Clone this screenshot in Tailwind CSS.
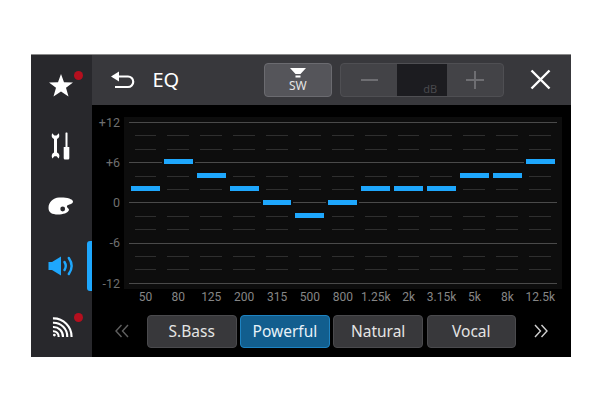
<!DOCTYPE html>
<html lang="en">
  <head>
    <meta charset="UTF-8" />
    <title>EQ</title>
    <script src="https://cdn.jsdelivr.net/npm/@tailwindcss/browser@4"></script>
  </head>
  <body class="bg-white font-['Noto_Sans',sans-serif]">
    <div class="pl-[31px] pt-[54px]">
      <div class="flex w-[540px] h-[303px] bg-black border-t border-[#8a8a8a] overflow-hidden">
        <!-- side menu -->
        <nav class="w-[60.5px] shrink-0 bg-[#28282c] flex flex-col">
          <div class="relative h-[60.4px] flex items-center justify-center">
            <svg class="ml-[-0.5px]" width="26" height="25" viewBox="0 0 26 25"><polygon fill="#fff" points="13,1 16,9.2 25,9.4 18,14.8 20.5,23.6 13,18.6 5.5,23.6 8,14.8 1,9.4 10,9.2" /></svg>
            <span class="absolute left-[42.5px] top-[15.5px] w-[9px] h-[9px] rounded-full bg-[#b50f1e]"></span>
          </div>
          <div class="h-[60.4px] flex items-center justify-center">
            <svg width="20" height="28" viewBox="0 0 20 28" fill="#fff">
              <path d="M1.2 1.2 C0.2 3.5 0.6 6 3 7 V20.5 C0.6 21.5 0.2 24 1.4 26.6 L3.4 24.2 H5.6 L7.6 26.6 C9 24 8.6 21.5 6 20.5 V7 C8.4 6 8.8 3.5 7.8 1.2 L5.6 3.6 H3.4 Z" />
              <rect x="14.5" y="0.5" width="2" height="15" rx="0.6" />
              <path d="M12.7 15 H18.3 V26 Q18.3 27.5 17 27.5 H14 Q12.7 27.5 12.7 26 Z" />
            </svg>
          </div>
          <div class="h-[60.4px] flex items-center justify-center">
            <svg width="26" height="18" viewBox="0 0 26 18">
              <path fill="#fff" d="M0.5 11 C0.5 5 5 1 11 0.5 C17 0 25 1.5 25 4.5 C25 7.5 20 7 19 9 C18.5 11 21 11 21 13 C20 16 15 17.5 10 17.5 C4 17.5 0.5 15.5 0.5 11 Z" />
              <circle cx="14.7" cy="12" r="2.4" fill="#28282c" />
            </svg>
          </div>
          <div class="relative h-[60.4px] flex items-center justify-center">
            <svg width="26" height="20" viewBox="0 0 26 20" fill="none">
              <path fill="#1ea7fd" d="M0.5 6 H4 L13 0.5 V19.5 L4 14 H0.5 Z" />
              <path stroke="#1ea7fd" stroke-width="2.4" stroke-linecap="round" d="M16.5 6 Q19 10 16.5 14 M20.8 2 Q26.5 10 20.8 18" />
            </svg>
            <span class="absolute right-0 top-[4.5px] w-[4.5px] h-[50px] bg-[#1ea7fd] rounded-l-[3px]"></span>
          </div>
          <div class="relative h-[60.4px] flex items-center justify-center">
            <svg class="ml-[2px]" width="21" height="22" viewBox="0 0 22 22" fill="none" stroke="#fff" stroke-width="2.2">
              <path d="M1 2 A19 19 0 0 1 20.5 21.5 M1 6.5 A14.5 14.5 0 0 1 16 21.5 M1 11 A10 10 0 0 1 11.5 21.5 M1 15.5 A5.5 5.5 0 0 1 7 21.5" />
              <circle cx="2.5" cy="19.5" r="1.5" fill="#fff" stroke="none" />
            </svg>
            <span class="absolute left-[42.5px] top-[16px] w-[9px] h-[9px] rounded-full bg-[#b50f1e]"></span>
          </div>
        </nav>

        <main class="flex-1 min-w-0 flex flex-col">
          <!-- header -->
          <header class="h-[49.5px] shrink-0 bg-[#38383c] flex items-center">
            <svg class="ml-[18px]" width="26" height="18" viewBox="0 0 26 18" fill="none" stroke="#fff" stroke-width="2.2">
              <path d="M3 5.5 H18 A5.2 5.2 0 0 1 18 16 H5" />
              <path fill="#fff" stroke="none" d="M1 5.5 L9 0.5 V10.5 Z" />
            </svg>
            <span class="ml-[17px] text-[20px] leading-none text-white">EQ</span>
            <div class="ml-[84.5px] w-[68px] h-[34px] rounded-[4px] bg-[#55555a] border border-[#6b6b70] flex flex-col items-center">
              <svg class="mt-[4px]" width="16" height="10" viewBox="0 0 16 10"><path fill="#fff" d="M0 0 H16 L10.5 6 H5.5 Z M5.5 7.5 H10.5 V9.5 H5.5 Z" /></svg>
              <span class="text-[12px] leading-[15px] text-[#e6e6e6]">SW</span>
            </div>
            <div class="ml-[8.5px] w-[164px] h-[34px] flex rounded-[4px] bg-[#434347] border border-[#4f4f53] overflow-hidden">
              <div class="flex-1 flex items-center justify-center">
                <span class="w-[17px] h-[2px] bg-[#6e6e72]"></span>
              </div>
              <div class="w-[50px] bg-[#1c1c20] flex items-end justify-end pr-[10px]">
                <span class="text-[11px] leading-[14px] text-[#49494d]">dB</span>
              </div>
              <div class="flex-1 flex items-center justify-center">
                <svg width="18" height="18" viewBox="0 0 18 18"><path stroke="#6e6e72" stroke-width="2" d="M0 9 H18 M9 0 V18" /></svg>
              </div>
            </div>
            <svg class="ml-[26px]" width="21" height="21" viewBox="0 0 21 21"><path stroke="#fff" stroke-width="2.4" d="M1.5 1.5 L19.5 19.5 M19.5 1.5 L1.5 19.5" /></svg>
          </header>

          <!-- chart -->
          <section class="flex pt-[12.5px]">
            <div id="scale" class="w-[28.5px] -mt-[1.3px] text-right text-[12.5px] text-[#6f6f6f] font-['Roboto',sans-serif]"></div>
            <div class="ml-[4px] w-[437.5px] h-[172px] bg-[#0d0d0d] px-[5px]">
              <div id="plot" class="grid grid-cols-13 -mt-[1.3px]"></div>
            </div>
          </section>
          <div id="freqs" class="grid grid-cols-13 ml-[37.5px] w-[427.7px] -mt-[1px] text-center text-[12px] leading-[16px] text-[#868686] font-['Roboto',sans-serif]"></div>

          <!-- presets -->
          <div class="flex items-center mt-[10px] h-[33px]">
            <svg class="ml-[23.5px]" width="14" height="14" viewBox="0 0 14 14" fill="none" stroke="#5f5f5f" stroke-width="1.4"><path d="M6.5 1 L1 7 L6.5 13 M13 1 L7.5 7 L13 13" /></svg>
            <div class="ml-[18px] flex gap-[3.7px] text-[15.5px] leading-none text-[#e4e4e4]">
              <button class="w-[89.5px] h-[33px] rounded-[4px] bg-[#38383b] border border-[#4a4a4d]">S.Bass</button>
              <button class="w-[89.5px] h-[33px] rounded-[4px] bg-[#125e8e] border border-[#1e83c2] text-[#e8f2f8]">Powerful</button>
              <button class="w-[89.5px] h-[33px] rounded-[4px] bg-[#38383b] border border-[#4a4a4d]">Natural</button>
              <button class="w-[89.5px] h-[33px] rounded-[4px] bg-[#38383b] border border-[#4a4a4d]">Vocal</button>
            </div>
            <svg class="ml-[17.5px]" width="14" height="14" viewBox="0 0 14 14" fill="none" stroke="#d0d0d0" stroke-width="1.4"><path d="M1 1 L6.5 7 L1 13 M7.5 1 L13 7 L7.5 13" /></svg>
          </div>
        </main>
      </div>
    </div>

    <script>
      var bands = [
        ["50", 2], ["80", 6], ["125", 4], ["200", 2], ["315", 0], ["500", -2], ["800", 0],
        ["1.25k", 2], ["2k", 2], ["3.15k", 2], ["5k", 4], ["8k", 4], ["12.5k", 6]
      ];
      var ROW = "h-[13.42px] flex items-center";

      var plot = "";
      var freqs = "";
      bands.forEach(function (b) {
        var rows = "";
        for (var i = 0; i < 13; i++) {
          var value = 12 - i * 2;
          if (value === b[1]) {
            rows += '<div class="' + ROW + '"><div class="w-full mx-[2px] mb-[1.5px] h-[5px] bg-[#1ea7fd]"></div></div>';
          } else if (i % 3 === 0) {
            rows += '<div class="' + ROW + '"><div class="w-full h-px bg-[#4a4a4a]"></div></div>';
          } else {
            rows += '<div class="' + ROW + '"><div class="w-full mx-[5.5px] h-px bg-[#2f2f2f]"></div></div>';
          }
        }
        plot += "<div>" + rows + "</div>";
        freqs += "<span>" + b[0] + "</span>";
      });
      document.getElementById("plot").innerHTML = plot;
      document.getElementById("freqs").innerHTML = freqs;

      var labels = { 0: "+12", 3: "+6", 6: "0", 9: "-6", 12: "-12" };
      var scale = "";
      for (var i = 0; i < 13; i++) {
        scale += '<div class="h-[13.42px] leading-[13.42px]">' + (labels[i] || "") + "</div>";
      }
      document.getElementById("scale").innerHTML = scale;
    </script>
  </body>
</html>
